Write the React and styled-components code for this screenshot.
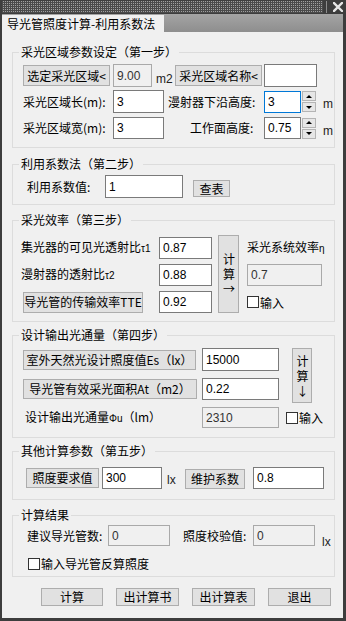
import React from 'react';
import styled, { createGlobalStyle } from 'styled-components';

const Global = createGlobalStyle`
  html, body { margin: 0; padding: 0; background: #ffffff; }
  body {
    font-family: "Noto Sans CJK SC", "Liberation Sans", sans-serif;
    font-size: 12px;
    color: #000;
  }
  * { box-sizing: border-box; }
`;

const Window = styled.div`
  width: 346px;
  height: 621px;
  display: flex;
  flex-direction: column;
  background: #3d3d3d;
  overflow: hidden;
`;

const TitleBar = styled.div`
  height: 14px;
  display: flex;
  align-items: stretch;
  padding: 1px 3px 1px 2px;
`;

const Dots = styled.div`
  flex: 1;
  background: repeating-conic-gradient(#a0a0a0 0 25%, #4a4a4a 0 100%) 0 0 / 2px 2px;
`;

const TitleSep = styled.div`
  width: 1px;
  background: #8c8c8c;
  margin: 0 6px 0 3px;
`;

const CloseBox = styled.div`
  width: 10px;
  display: flex;
  align-items: center;
  justify-content: center;
`;

const TabStrip = styled.div`
  height: 18px;
  margin: 0 3px 0 2px;
  background: linear-gradient(#a4a4a4, #8e8e8e);
  display: flex;
  align-items: flex-end;
`;

const Tab = styled.div`
  width: 162px;
  height: 17px;
  background: #f0f0f0;
  padding: 1px 0 0 5px;
  line-height: 16px;
  font-size: 12px;
  white-space: nowrap;
`;

const Body = styled.div`
  flex: 1;
  margin: 0 3px 3px 2px;
  background: #f0f0f0;
  padding: 12px 8px 0 10px;
  display: flex;
  flex-direction: column;
`;

const Group = styled.fieldset`
  margin: ${(p) => p.$mt || 0}px 0 0;
  padding: 0;
  border: 1px solid #dcdcdc;
  min-width: 0;
`;

const Legend = styled.legend`
  margin-left: 6px;
  padding: 0 2px;
  font-size: 12px;
  line-height: 16px;
  color: #000;
`;

const Inner = styled.div`
  padding: ${(p) => p.$pt}px 0 ${(p) => p.$pb}px ${(p) => p.$pl}px;
`;

const Row = styled.div`
  display: flex;
  align-items: center;
  height: ${(p) => p.$h}px;
  margin-top: ${(p) => p.$mt || 0}px;
`;

const Label = styled.span`
  flex-shrink: 0;
  width: ${(p) => (p.$w ? `${p.$w}px` : 'auto')};
  padding-left: ${(p) => p.$pl || 0}px;
  margin-left: ${(p) => p.$ml || 0}px;
  white-space: nowrap;
  line-height: 16px;
`;

const Small = styled.span`
  font-family: "Liberation Sans", sans-serif;
  font-size: 10px;
`;

const Unit = styled.span`
  flex-shrink: 0;
  align-self: flex-end;
  width: ${(p) => (p.$w ? `${p.$w}px` : 'auto')};
  padding-left: ${(p) => p.$pl || 0}px;
  margin-bottom: ${(p) => p.$pb || 0}px;
  font-family: "Liberation Sans", sans-serif;
  font-size: 12px;
  line-height: 14px;
  color: #222;
`;

const Btn = styled.button`
  flex-shrink: 0;
  width: ${(p) => p.$w}px;
  height: ${(p) => p.$h || 20}px;
  margin: ${(p) => p.$mt || 0}px 0 0 ${(p) => p.$ml || 0}px;
  padding: 0;
  background: #e1e1e1;
  border: 1px solid #adadad;
  color: #000;
  font-family: "Noto Sans CJK SC", "Liberation Sans", sans-serif;
  font-size: 12px;
  line-height: 14px;
  display: flex;
  align-items: center;
  justify-content: center;
  white-space: nowrap;
  overflow: visible;
`;

const VBtn = styled.button`
  grid-column: ${(p) => p.$c};
  grid-row: 1 / span ${(p) => p.$span};
  align-self: start;
  width: ${(p) => p.$w}px;
  height: ${(p) => p.$h}px;
  margin: ${(p) => p.$mt || 0}px 0 0 ${(p) => p.$ml || 0}px;
  padding: 0;
  background: #e1e1e1;
  border: 1px solid #adadad;
  color: #000;
  font-family: "Noto Sans CJK SC", "Liberation Sans", sans-serif;
  font-size: 12px;
  display: flex;
  align-items: center;
  justify-content: center;
`;

const VText = styled.span`
  writing-mode: vertical-rl;
  text-orientation: upright;
  letter-spacing: 3px;
  line-height: 14px;
  white-space: nowrap;
  padding-top: 3px;
`;

const Field = styled.input`
  flex-shrink: 0;
  width: ${(p) => p.$w}px;
  height: ${(p) => p.$h || 22}px;
  margin: 0 0 0 ${(p) => p.$ml || 0}px;
  padding: 0 3px;
  border: 1px solid ${(p) => (p.$focus ? '#0078d7' : p.$dis ? '#a9a9a9' : '#7a7a7a')};
  background: ${(p) => (p.$dis ? '#f0f0f0' : '#ffffff')};
  color: ${(p) => (p.$dis ? '#333' : '#000')};
  font-family: "Liberation Sans", sans-serif;
  font-size: 12px;
  outline: none;
`;

const SpinWrap = styled.div`
  flex-shrink: 0;
  width: 14px;
  height: 21px;
  margin-left: 1px;
  display: flex;
  flex-direction: column;
  gap: 1px;
`;

const SpinBtn = styled.div`
  flex: 1;
  background: #e6e6e6;
  border: 1px solid #b4b4b4;
  display: flex;
  align-items: center;
  justify-content: center;
  &::after {
    content: '';
    border-left: 3px solid transparent;
    border-right: 3px solid transparent;
    ${(p) => (p.$up ? 'border-bottom: 3px solid #000;' : 'border-top: 3px solid #000;')}
  }
`;

const Check = styled.label`
  display: flex;
  align-items: center;
  gap: 1px;
  margin-left: ${(p) => p.$ml || 0}px;
  line-height: 15px;
  white-space: nowrap;
`;

const Box = styled.span`
  width: 12px;
  height: 12px;
  border: 1px solid #333;
  background: #fff;
  display: inline-block;
`;

const Grid3 = styled.div`
  display: grid;
  grid-template-columns: 138px 59px 29px 75px;
  grid-template-rows: 22px 22px 22px;
  row-gap: 5px;
  align-items: center;
`;

const Grid4 = styled.div`
  display: grid;
  grid-template-columns: 179px 77px 1fr;
  grid-template-rows: 23px 22px 21px;
  row-gap: 7px;
  align-items: center;
`;

const Cell = styled.div`
  grid-column: ${(p) => p.$c};
  grid-row: ${(p) => p.$r};
  display: flex;
  align-items: center;
`;

const Footer = styled.div`
  display: flex;
  gap: 13px;
  margin-top: 11px;
  padding-left: 29px;
`;

function Spin() {
  return (
    <SpinWrap>
      <SpinBtn $up />
      <SpinBtn />
    </SpinWrap>
  );
}

function CheckItem({ label, ml }) {
  return (
    <Check $ml={ml}>
      <Box />
      {label}
    </Check>
  );
}

export default function App() {
  return (
    <>
      <Global />
      <Window>
        <TitleBar>
          <Dots />
          <TitleSep />
          <CloseBox>
            <svg width="10" height="10" viewBox="0 0 10 10">
              <path d="M1 1 L9 9 M9 1 L1 9" stroke="#e6e6e6" strokeWidth="2.4" strokeLinecap="square" />
            </svg>
          </CloseBox>
        </TitleBar>
        <TabStrip>
          <Tab>导光管照度计算-利用系数法</Tab>
        </TabStrip>
        <Body>
          <Group>
            <Legend>采光区域参数设定（第一步）</Legend>
            <Inner $pt={4} $pb={8} $pl={10}>
              <Row $h={23}>
                <Btn $w={87} $h={21}>选定采光区域&lt;</Btn>
                <Field $w={39} $h={23} $ml={3} $dis readOnly value="9.00" />
                <Unit $w={23} $pl={4} $pb={1}>m2</Unit>
                <Btn $w={87} $h={21}>采光区域名称&lt;</Btn>
                <Field $w={53} $h={23} $ml={2} readOnly value="" />
              </Row>
              <Row $h={23} $mt={3}>
                <Label $w={90}>采光区域长(m):</Label>
                <Field $w={51} $h={23} readOnly value="3" />
                <Label $w={100} $pl={4}>漫射器下沿高度:</Label>
                <Field $w={37} $h={22} $focus readOnly value="3" />
                <Spin />
                <Unit $pl={7} $pb={2}>m</Unit>
              </Row>
              <Row $h={22} $mt={4}>
                <Label $w={90}>采光区域宽(m):</Label>
                <Field $w={51} $h={22} readOnly value="3" />
                <Label $w={100} $pl={26}>工作面高度:</Label>
                <Field $w={37} $h={22} readOnly value="0.75" />
                <Spin />
                <Unit $pl={7} $pb={1}>m</Unit>
              </Row>
            </Inner>
          </Group>

          <Group $mt={8}>
            <Legend>利用系数法（第二步）</Legend>
            <Inner $pt={3} $pb={6} $pl={14}>
              <Row $h={23}>
                <Label $w={78}>利用系数值:</Label>
                <Field $w={78} $h={23} readOnly value="1" />
                <Btn $w={37} $h={17} $ml={10} $mt={4}>查表</Btn>
              </Row>
            </Inner>
          </Group>

          <Group $mt={7}>
            <Legend>采光效率（第三步）</Legend>
            <Inner $pt={9} $pb={8} $pl={8}>
              <Grid3>
                <Cell $c={1} $r={1}>
                  <Label>集光器的可见光透射比<Small>τ1</Small></Label>
                </Cell>
                <Cell $c={2} $r={1}>
                  <Field $w={53} $h={22} readOnly value="0.87" />
                </Cell>
                <VBtn $c={3} $span={3} $w={21} $h={78} $mt={-2}>
                  <VText>计算→</VText>
                </VBtn>
                <Cell $c={4} $r={1}>
                  <Label>采光系统效率<Small>η</Small></Label>
                </Cell>
                <Cell $c={1} $r={2}>
                  <Label>漫射器的透射比<Small>τ2</Small></Label>
                </Cell>
                <Cell $c={2} $r={2}>
                  <Field $w={53} $h={22} readOnly value="0.88" />
                </Cell>
                <Cell $c={4} $r={2}>
                  <Field $w={75} $h={22} $dis readOnly value="0.7" />
                </Cell>
                <Cell $c={1} $r={3}>
                  <Btn $w={120} $h={21} $ml={2}>导光管的传输效率TTE</Btn>
                </Cell>
                <Cell $c={2} $r={3}>
                  <Field $w={53} $h={22} readOnly value="0.92" />
                </Cell>
                <Cell $c={4} $r={3}>
                  <CheckItem label="输入" />
                </Cell>
              </Grid3>
            </Inner>
          </Group>

          <Group $mt={5}>
            <Legend>设计输出光通量（第四步）</Legend>
            <Inner $pt={5} $pb={9} $pl={10}>
              <Grid4>
                <Cell $c={1} $r={1}>
                  <Btn $w={173} $h={20}>室外天然光设计照度值Es（lx）</Btn>
                </Cell>
                <Cell $c={2} $r={1}>
                  <Field $w={77} $h={23} readOnly value="15000" />
                </Cell>
                <VBtn $c={3} $span={2} $w={20} $h={55} $ml={13}>
                  <VText>计算↓</VText>
                </VBtn>
                <Cell $c={1} $r={2}>
                  <Btn $w={174} $h={20}>导光管有效采光面积At（m2）</Btn>
                </Cell>
                <Cell $c={2} $r={2}>
                  <Field $w={77} $h={22} readOnly value="0.22" />
                </Cell>
                <Cell $c={1} $r={3}>
                  <Label $pl={2}>设计输出光通量<Small>Φu</Small>（lm）</Label>
                </Cell>
                <Cell $c={2} $r={3}>
                  <Field $w={77} $h={21} $dis readOnly value="2310" />
                </Cell>
                <Cell $c={3} $r={3}>
                  <CheckItem label="输入" ml={7} />
                </Cell>
              </Grid4>
            </Inner>
          </Group>

          <Group $mt={5}>
            <Legend>其他计算参数（第五步）</Legend>
            <Inner $pt={7} $pb={9} $pl={13}>
              <Row $h={24}>
                <Btn $w={73} $h={20}>照度要求值</Btn>
                <Field $w={60} $h={22} $ml={3} readOnly value="300" />
                <Unit $w={23} $pl={5} $pb={3}>lx</Unit>
                <Btn $w={60} $h={20} $mt={2}>维护系数</Btn>
                <Field $w={71} $h={22} $ml={8} readOnly value="0.8" />
              </Row>
            </Inner>
          </Group>

          <Group $mt={7}>
            <Legend>计算结果</Legend>
            <Inner $pt={2} $pb={5} $pl={14}>
              <Row $h={21}>
                <Label $w={81}>建议导光管数:</Label>
                <Field $w={62} $h={21} $dis readOnly value="0" />
                <Label $w={70} $ml={13}>照度校验值:</Label>
                <Field $w={62} $h={21} $dis readOnly value="0" />
                <Unit $pl={7} $pb={-3}>lx</Unit>
              </Row>
              <Row $h={15} $mt={10}>
                <CheckItem label="输入导光管反算照度" ml={1} />
              </Row>
            </Inner>
          </Group>

          <Footer>
            <Btn $w={62} $h={18}>计算</Btn>
            <Btn $w={63} $h={18}>出计算书</Btn>
            <Btn $w={63} $h={18}>出计算表</Btn>
            <Btn $w={63} $h={18}>退出</Btn>
          </Footer>
        </Body>
      </Window>
    </>
  );
}
